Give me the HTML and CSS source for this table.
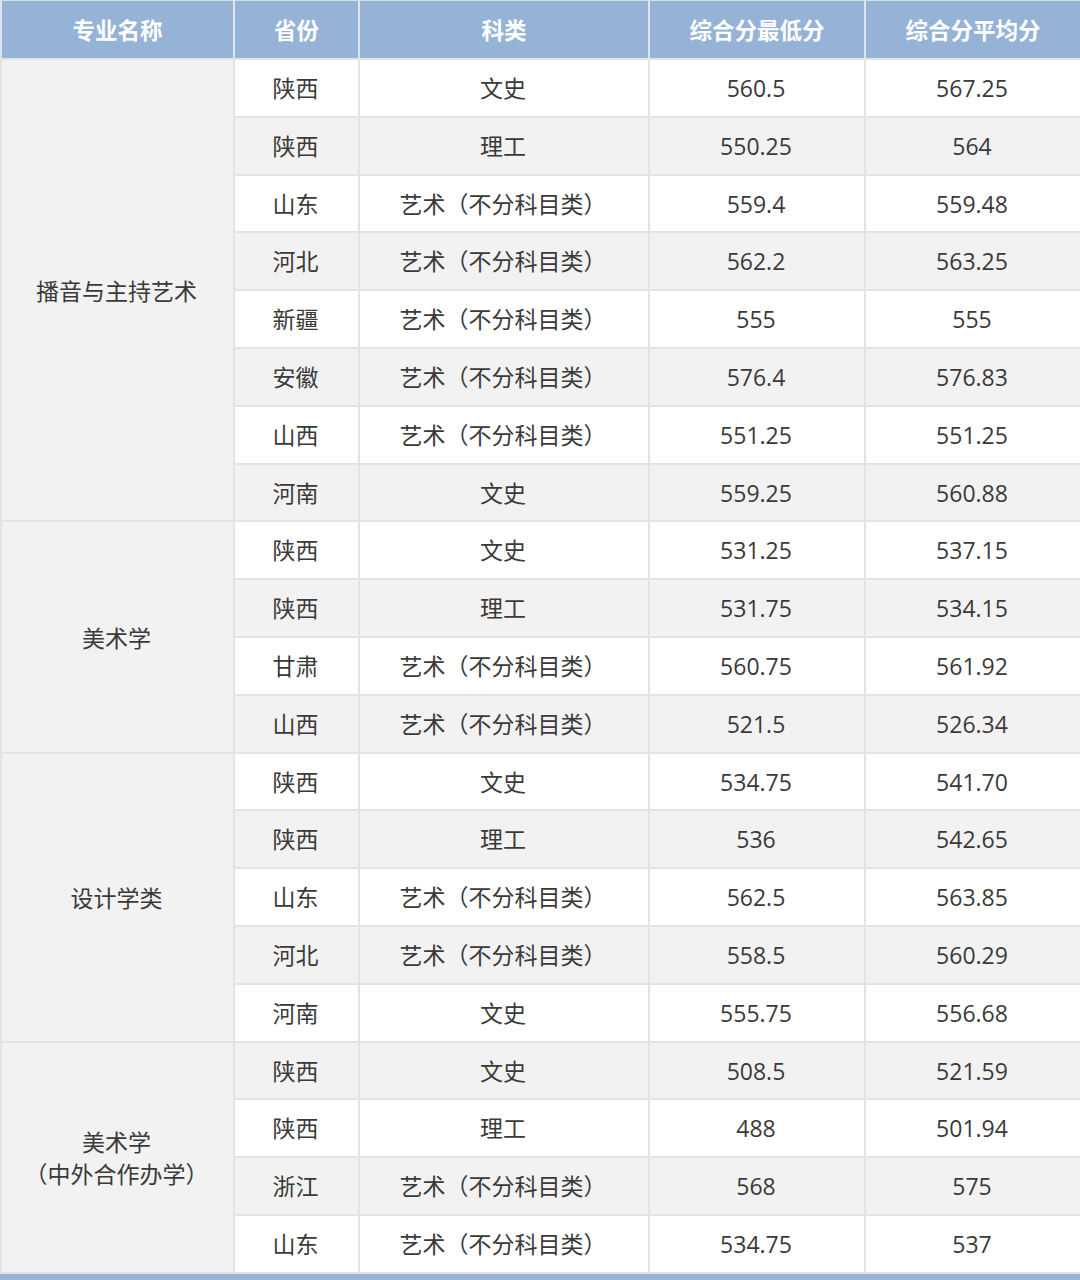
FILE: index.html
```html
<!DOCTYPE html>
<html lang="zh">
<head>
<meta charset="utf-8">
<link rel="stylesheet" href="styles.css">
</head>
<body>
<div class="wrap">
<table class="score">
<colgroup>
<col class="c1"><col class="c2"><col class="c3"><col class="c4"><col class="c5">
</colgroup>
<thead>
<tr><th>专业名称</th><th>省份</th><th>科类</th><th>综合分最低分</th><th>综合分平均分</th></tr>
</thead>
<tbody>
<tr><td class="major" rowspan="8">播音与主持艺术</td><td>陕西</td><td>文史</td><td>560.5</td><td>567.25</td></tr>
<tr class="alt"><td>陕西</td><td>理工</td><td>550.25</td><td>564</td></tr>
<tr><td>山东</td><td>艺术（不分科目类）</td><td>559.4</td><td>559.48</td></tr>
<tr class="alt"><td>河北</td><td>艺术（不分科目类）</td><td>562.2</td><td>563.25</td></tr>
<tr><td>新疆</td><td>艺术（不分科目类）</td><td>555</td><td>555</td></tr>
<tr class="alt"><td>安徽</td><td>艺术（不分科目类）</td><td>576.4</td><td>576.83</td></tr>
<tr><td>山西</td><td>艺术（不分科目类）</td><td>551.25</td><td>551.25</td></tr>
<tr class="alt"><td>河南</td><td>文史</td><td>559.25</td><td>560.88</td></tr>
<tr><td class="major" rowspan="4">美术学</td><td>陕西</td><td>文史</td><td>531.25</td><td>537.15</td></tr>
<tr class="alt"><td>陕西</td><td>理工</td><td>531.75</td><td>534.15</td></tr>
<tr><td>甘肃</td><td>艺术（不分科目类）</td><td>560.75</td><td>561.92</td></tr>
<tr class="alt"><td>山西</td><td>艺术（不分科目类）</td><td>521.5</td><td>526.34</td></tr>
<tr><td class="major" rowspan="5">设计学类</td><td>陕西</td><td>文史</td><td>534.75</td><td>541.70</td></tr>
<tr class="alt"><td>陕西</td><td>理工</td><td>536</td><td>542.65</td></tr>
<tr><td>山东</td><td>艺术（不分科目类）</td><td>562.5</td><td>563.85</td></tr>
<tr class="alt"><td>河北</td><td>艺术（不分科目类）</td><td>558.5</td><td>560.29</td></tr>
<tr><td>河南</td><td>文史</td><td>555.75</td><td>556.68</td></tr>
<tr class="alt"><td class="major" rowspan="4">美术学<br>（中外合作办学）</td><td>陕西</td><td>文史</td><td>508.5</td><td>521.59</td></tr>
<tr><td>陕西</td><td>理工</td><td>488</td><td>501.94</td></tr>
<tr class="alt"><td>浙江</td><td>艺术（不分科目类）</td><td>568</td><td>575</td></tr>
<tr><td>山东</td><td>艺术（不分科目类）</td><td>534.75</td><td>537</td></tr>
</tbody>
</table>
<div class="foot"></div>
</div>
</body>
</html>
```

FILE: styles.css
```css
html, body {
  margin: 0;
  padding: 0;
  background: #ffffff;
}
.wrap {
  width: 1080px;
  height: 1280px;
  overflow: hidden;
}
.score {
  width: 1080px;
  border-collapse: collapse;
  table-layout: fixed;
  font-family: "Open Sans", "Noto Sans CJK SC", sans-serif;
  font-size: 23px;
  color: #3a3a3a;
}
.c1 { width: 233px; }
.c2 { width: 125px; }
.c3 { width: 290px; }
.c4 { width: 216px; }
.c5 { width: 216px; }
.score th {
  background: #95b3d7;
  color: #ffffff;
  font-weight: bold;
  height: 56px;
  padding: 0 0 1px 0;
  border: 2px solid #dfe3ea;
  border-top: 1px solid #d4dbe6;
  text-align: center;
  vertical-align: middle;
  font-family: "Noto Sans CJK SC", sans-serif;
  font-size: 22.5px;
}
.score td {
  height: 57.8px;
  padding: 2px 2px 0 0;
  box-sizing: border-box;
  border: 2px solid #e3e3e3;
  text-align: center;
  vertical-align: middle;
  background: #ffffff;
  line-height: 1.2;
}
.score tr.alt td {
  background: #f2f2f2;
}
.score td.major,
.score tr.alt td.major {
  background: #f2f2f2;
  line-height: 32px;
}
.foot {
  height: 8px;
  background: #95b3d7;
}
```
